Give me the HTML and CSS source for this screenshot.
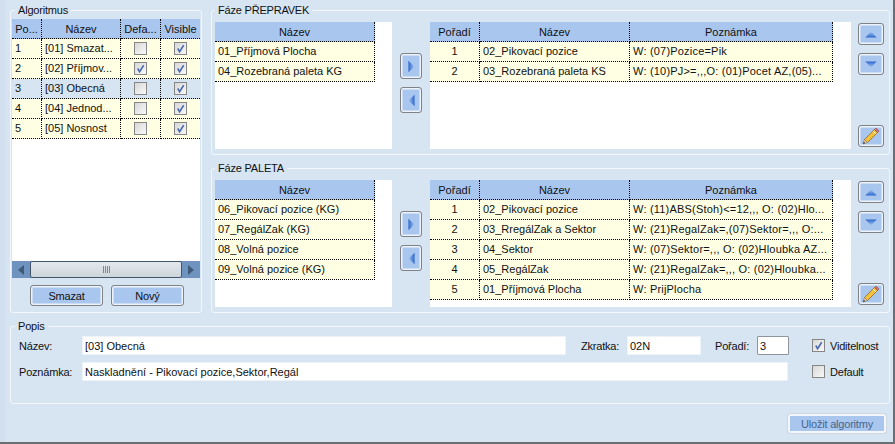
FILE: index.html
```html
<!DOCTYPE html>
<html>
<head>
  <meta charset="utf-8">
  <title>Algoritmy</title>
  <link rel="stylesheet" href="styles.css">
</head>
<body>
  <svg class="defs" width="0" height="0">
    <defs>
      <linearGradient id="triUp" x1="0" y1="0" x2="0" y2="1">
        <stop offset="0" stop-color="#a9c6ef"/>
        <stop offset="1" stop-color="#2a66cc"/>
      </linearGradient>
      <linearGradient id="triDown" x1="0" y1="1" x2="0" y2="0">
        <stop offset="0" stop-color="#a9c6ef"/>
        <stop offset="1" stop-color="#2a66cc"/>
      </linearGradient>
      <linearGradient id="triRight" x1="1" y1="0" x2="0" y2="0">
        <stop offset="0" stop-color="#a9c6ef"/>
        <stop offset="1" stop-color="#2a66cc"/>
      </linearGradient>
      <linearGradient id="triLeft" x1="0" y1="0" x2="1" y2="0">
        <stop offset="0" stop-color="#a9c6ef"/>
        <stop offset="1" stop-color="#2a66cc"/>
      </linearGradient>
      <symbol id="tick" viewBox="0 0 12 12">
        <path d="M3 6 L5 9.5 L9.5 2.5" fill="none" stroke="#4a68ae" stroke-width="1.7"/>
      </symbol>
      <symbol id="up" viewBox="0 0 14 8"><path d="M7 0.5 L13.5 7.5 H0.5 Z" fill="url(#triUp)"/></symbol>
      <symbol id="down" viewBox="0 0 14 8"><path d="M7 7.5 L13.5 0.5 H0.5 Z" fill="url(#triDown)"/></symbol>
      <symbol id="right" viewBox="0 0 8 14"><path d="M7.5 7 L0.5 0.5 V13.5 Z" fill="url(#triRight)"/></symbol>
      <symbol id="left" viewBox="0 0 8 14"><path d="M0.5 7 L7.5 0.5 V13.5 Z" fill="url(#triLeft)"/></symbol>
      <symbol id="pencil" viewBox="0 0 18 18">
        <path d="M12.5 2.5 L15.5 5.5 L5.5 15.5 L2.5 12.5 Z" fill="#f2c23e" stroke="#9a6a1c" stroke-width="0.8"/>
        <path d="M11 4 L14 7" stroke="#fff3b8" stroke-width="1"/>
        <path d="M12.5 2.5 L14 1 L17 4 L15.5 5.5 Z" fill="#d9717a" stroke="#8a4a4a" stroke-width="0.6"/>
        <path d="M2.5 12.5 L5.5 15.5 L1 17 Z" fill="#f3dcb4" stroke="#8a6a3c" stroke-width="0.6"/>
        <path d="M1 17 L2 14.8 L3.2 16 Z" fill="#333"/>
      </symbol>
    </defs>
  </svg>

  <div class="window">
    <div class="top">
      <fieldset class="group algo">
        <legend>Algoritmus</legend>
        <div class="grid algo-grid">
          <div class="grid-body">
            <table>
              <colgroup><col class="c30"><col class="c80"><col class="c40"><col></colgroup>
              <thead><tr><th>Po...</th><th>Název</th><th>Defa...</th><th class="last">Visible</th></tr></thead>
              <tbody>
                <tr><td>1</td><td>[01] Smazat...</td><td class="mid"><span class="check"></span></td><td class="mid last"><span class="check"><svg><use href="#tick"/></svg></span></td></tr>
                <tr><td>2</td><td>[02] Příjmov...</td><td class="mid"><span class="check"><svg><use href="#tick"/></svg></span></td><td class="mid last"><span class="check"><svg><use href="#tick"/></svg></span></td></tr>
                <tr class="selected"><td>3</td><td>[03] Obecná</td><td class="mid"><span class="check"></span></td><td class="mid last"><span class="check"><svg><use href="#tick"/></svg></span></td></tr>
                <tr><td>4</td><td>[04] Jednod...</td><td class="mid"><span class="check"></span></td><td class="mid last"><span class="check"><svg><use href="#tick"/></svg></span></td></tr>
                <tr><td>5</td><td>[05] Nosnost</td><td class="mid"><span class="check"></span></td><td class="mid last"><span class="check"><svg><use href="#tick"/></svg></span></td></tr>
              </tbody>
            </table>
          </div>
          <div class="scrollbar">
            <span class="scroll-end"><i class="arrow-l"></i></span>
            <span class="thumb"><i class="grip"></i></span>
            <span class="scroll-end"><i class="arrow-r"></i></span>
          </div>
        </div>
        <div class="algo-buttons">
          <button class="btn">Smazat</button>
          <button class="btn">Nový</button>
        </div>
      </fieldset>

      <div class="phases">
        <fieldset class="group phase">
          <legend>Fáze PŘEPRAVEK</legend>
          <div class="phase-body">
            <div class="grid list-grid">
              <table class="t-left">
                <thead><tr><th>Název</th></tr></thead>
                <tbody>
                  <tr><td>01_Příjmová Plocha</td></tr>
                  <tr><td>04_Rozebraná paleta KG</td></tr>
                </tbody>
              </table>
            </div>
            <div class="move">
              <button class="tool tall"><svg class="tri-v"><use href="#right"/></svg></button>
              <button class="tool tall"><svg class="tri-v"><use href="#left"/></svg></button>
            </div>
            <div class="grid order-grid">
              <table class="t-right">
                <colgroup><col class="c50"><col class="c150"><col></colgroup>
                <thead><tr><th>Pořadí</th><th>Název</th><th>Poznámka</th></tr></thead>
                <tbody>
                  <tr><td class="mid">1</td><td>02_Pikovací pozice</td><td class="note">W: (07)Pozice=Pik</td></tr>
                  <tr><td class="mid">2</td><td>03_Rozebraná paleta KS</td><td class="note">W: (10)PJ&gt;=,,,O: (01)Pocet AZ,(05)...</td></tr>
                </tbody>
              </table>
            </div>
            <div class="tools">
              <button class="tool wide"><svg class="tri-h"><use href="#up"/></svg></button>
              <button class="tool wide"><svg class="tri-h"><use href="#down"/></svg></button>
              <button class="tool wide edit"><svg class="pencil"><use href="#pencil"/></svg></button>
            </div>
          </div>
        </fieldset>

        <fieldset class="group phase">
          <legend>Fáze PALETA</legend>
          <div class="phase-body">
            <div class="grid list-grid">
              <table class="t-left">
                <thead><tr><th>Název</th></tr></thead>
                <tbody>
                  <tr><td>06_Pikovací pozice (KG)</td></tr>
                  <tr><td>07_RegálZak (KG)</td></tr>
                  <tr><td>08_Volná pozice</td></tr>
                  <tr><td>09_Volná pozice (KG)</td></tr>
                </tbody>
              </table>
            </div>
            <div class="move">
              <button class="tool tall"><svg class="tri-v"><use href="#right"/></svg></button>
              <button class="tool tall"><svg class="tri-v"><use href="#left"/></svg></button>
            </div>
            <div class="grid order-grid">
              <table class="t-right">
                <colgroup><col class="c50"><col class="c150"><col></colgroup>
                <thead><tr><th>Pořadí</th><th>Název</th><th>Poznámka</th></tr></thead>
                <tbody>
                  <tr><td class="mid">1</td><td>02_Pikovací pozice</td><td class="note">W: (11)ABS(Stoh)&lt;=12,,, O: (02)Hlo...</td></tr>
                  <tr><td class="mid">2</td><td>03_RregálZak a Sektor</td><td class="note">W: (21)RegalZak=,(07)Sektor=,,, O:...</td></tr>
                  <tr><td class="mid">3</td><td>04_Sektor</td><td class="note">W: (07)Sektor=,,, O: (02)Hloubka AZ...</td></tr>
                  <tr><td class="mid">4</td><td>05_RegálZak</td><td class="note">W: (21)RegalZak=,,, O: (02)Hloubka...</td></tr>
                  <tr><td class="mid">5</td><td>01_Příjmová Plocha</td><td class="note">W: PrijPlocha</td></tr>
                </tbody>
              </table>
            </div>
            <div class="tools">
              <button class="tool wide"><svg class="tri-h"><use href="#up"/></svg></button>
              <button class="tool wide"><svg class="tri-h"><use href="#down"/></svg></button>
              <button class="tool wide edit"><svg class="pencil"><use href="#pencil"/></svg></button>
            </div>
          </div>
        </fieldset>
      </div>
    </div>

    <fieldset class="group popis">
      <legend>Popis</legend>
      <div class="form-row">
        <label class="lbl lbl-name">Název:</label>
        <input class="field f-name" value="[03] Obecná">
        <label class="lbl lbl-short">Zkratka:</label>
        <input class="field f-short" value="02N">
        <label class="lbl lbl-order">Pořadí:</label>
        <input class="field f-order" value="3">
        <span class="opt"><span class="check"><svg><use href="#tick"/></svg></span>Viditelnost</span>
      </div>
      <div class="form-row">
        <label class="lbl lbl-name">Poznámka:</label>
        <input class="field f-note" value="Naskladnění - Pikovací pozice,Sektor,Regál">
        <span class="opt"><span class="check"></span>Default</span>
      </div>
    </fieldset>

    <div class="footer">
      <button class="btn save">Uložit algoritmy</button>
    </div>
  </div>
</body>
</html>
```

FILE: styles.css
```css
html, body {
  height: 100%;
}

body {
  margin: 0;
  background: #d7e4f2;
  color: #111;
  font-family: "Liberation Sans", Arial, sans-serif;
  font-size: 11px;
  overflow: hidden;
}

.defs {
  position: absolute;
}

.window {
  box-sizing: border-box;
  height: 444px;
  padding: 3px 3px 0 10px;
  border-right: 2px solid #6b6f74;
  border-bottom: 2px solid #6b6f74;
  box-shadow: inset 5px 0 0 #d2dfee, inset 1px 0 0 #6b6f74;
}

/* group boxes */
.group {
  margin: 0;
  min-width: 0;
  border: 1px solid #f3f7fb;
  border-radius: 3px;
  padding: 0;
}

.group legend {
  margin-left: 3px;
  padding: 0 3px;
  line-height: 14px;
  font-size: 11px;
  letter-spacing: -0.2px;
}

.top {
  display: flex;
  gap: 9px;
}

.algo {
  width: 192px;
  box-sizing: border-box;
  padding: 2px 1px 6px;
}

.phases {
  flex: 1;
  display: flex;
  flex-direction: column;
  gap: 6px;
}

.phase {
  padding: 5px 4px 5px 3px;
}

.phase legend {
  margin-left: 0;
}

.phase-body {
  display: flex;
  height: 127px;
}

/* grids */
.grid {
  background: #fff;
}

.grid table {
  table-layout: fixed;
  border-collapse: separate;
  border-spacing: 0;
  width: 100%;
}

.grid th, .grid td {
  box-sizing: border-box;
  height: 20px;
  padding: 0 3px;
  border-right: 1px dotted #000;
  border-bottom: 1px dotted #000;
  font-weight: normal;
  white-space: nowrap;
  overflow: hidden;
}

.grid th {
  background: #a9c6ef;
  text-align: center;
}

.grid td {
  padding-bottom: 1px;
  background: #ffffe3;
}

.grid .mid {
  text-align: center;
  line-height: 12px;
}

.grid .last {
  border-right: none;
}

.grid .note {
  letter-spacing: 0.2px;
}

.grid .selected td {
  background: #d7e4f2;
}

.c30 { width: 30px; }
.c40 { width: 40px; }
.c50 { width: 50px; }
.c80 { width: 79px; }
.c150 { width: 150px; }

.algo-grid {
  height: 259px;
  display: flex;
  flex-direction: column;
}

.grid-body {
  flex: 1;
}

.list-grid {
  width: 177px;
}

.t-left {
  width: 160px !important;
}

.order-grid {
  width: 421px;
}

.t-right {
  width: 403px !important;
}

/* scrollbar */
.scrollbar {
  height: 17px;
  display: flex;
  background: #6f93bf;
}

.scroll-end {
  width: 18px;
  display: flex;
  align-items: center;
  justify-content: center;
}

.arrow-l, .arrow-r {
  border-top: 5px solid transparent;
  border-bottom: 5px solid transparent;
}

.arrow-l {
  border-right: 6px solid #3f5a78;
}

.arrow-r {
  border-left: 6px solid #3f5a78;
}

.thumb {
  flex: 1;
  box-sizing: border-box;
  border: 1px solid #46566a;
  border-radius: 2px;
  background: linear-gradient(#e3e8ec, #cdd5dc);
  display: flex;
  align-items: center;
  justify-content: center;
}

.grip {
  width: 7px;
  height: 7px;
  background: repeating-linear-gradient(90deg, #7d8894 0 1px, transparent 1px 2px);
}

/* checkbox */
.check {
  display: inline-block;
  box-sizing: border-box;
  width: 13px;
  height: 13px;
  border: 1px solid #868686;
  background: linear-gradient(135deg, #d8d8d8, #f8f8f8);
  vertical-align: middle;
}

.check svg {
  display: block;
  width: 11px;
  height: 11px;
}

/* buttons */
.btn, .tool {
  box-sizing: border-box;
  margin: 0;
  padding: 0;
  border: 1px solid #7f8387;
  border-radius: 3px;
  background: #a9c6ef;
  box-shadow: inset 0 0 0 1.5px #eef3f9;
  font-family: inherit;
  font-size: 11px;
  letter-spacing: -0.2px;
  color: #111;
}

.algo-buttons {
  display: flex;
  gap: 8px;
  margin-top: 7px;
  padding-left: 18px;
}

.algo-buttons .btn {
  width: 73px;
  height: 21px;
}

.move {
  width: 38px;
  padding-top: 31px;
  display: flex;
  flex-direction: column;
  align-items: center;
  gap: 8px;
  box-sizing: border-box;
}

.tool {
  display: flex;
  align-items: center;
  justify-content: center;
}

.tall {
  width: 22px;
  height: 26px;
}

.tools {
  width: 26px;
  margin-left: 7px;
  padding: 1px 0 2px;
  display: flex;
  flex-direction: column;
  gap: 8px;
  box-sizing: border-box;
}

.wide {
  width: 26px;
  height: 22px;
}

.edit {
  margin-top: auto;
}

.tri-v {
  width: 7px;
  height: 13px;
}

.tri-h {
  width: 14px;
  height: 7px;
}

.pencil {
  width: 18px;
  height: 18px;
}

/* description */
.popis {
  margin-top: 6px;
  padding: 3px 0 22px 8px;
}

.popis legend {
  margin-left: -4px;
}

.form-row {
  display: flex;
  align-items: center;
  height: 19px;
}

.form-row + .form-row {
  margin-top: 7px;
}

.lbl, .opt {
  letter-spacing: -0.2px;
}

.lbl-name { width: 63px; }
.lbl-short { width: 46px; margin-left: 15px; }
.lbl-order { width: 42px; margin-left: 14px; }

.field {
  box-sizing: border-box;
  height: 19px;
  margin: 0;
  padding: 0 2px;
  border: 1px solid #eef3f9;
  border-radius: 1px;
  background: #fff;
  font-family: inherit;
  font-size: 11px;
  color: #111;
}

.f-name { width: 484px; }
.f-short { width: 74px; }
.f-order { width: 32px; border-color: #8f959c; }
.f-note { width: 706px; }

.opt {
  display: flex;
  align-items: center;
  gap: 5px;
  margin-left: 23px;
}

.f-note + .opt {
  margin-left: 24px;
}

.footer {
  display: flex;
  justify-content: flex-end;
  padding-right: 3px;
  margin-top: 9px;
}

.save {
  width: 100px;
  height: 21px;
  border-color: #d0d8e2;
  box-shadow: inset 0 0 0 2px #f3f7fb;
  color: #44658f;
}
```
